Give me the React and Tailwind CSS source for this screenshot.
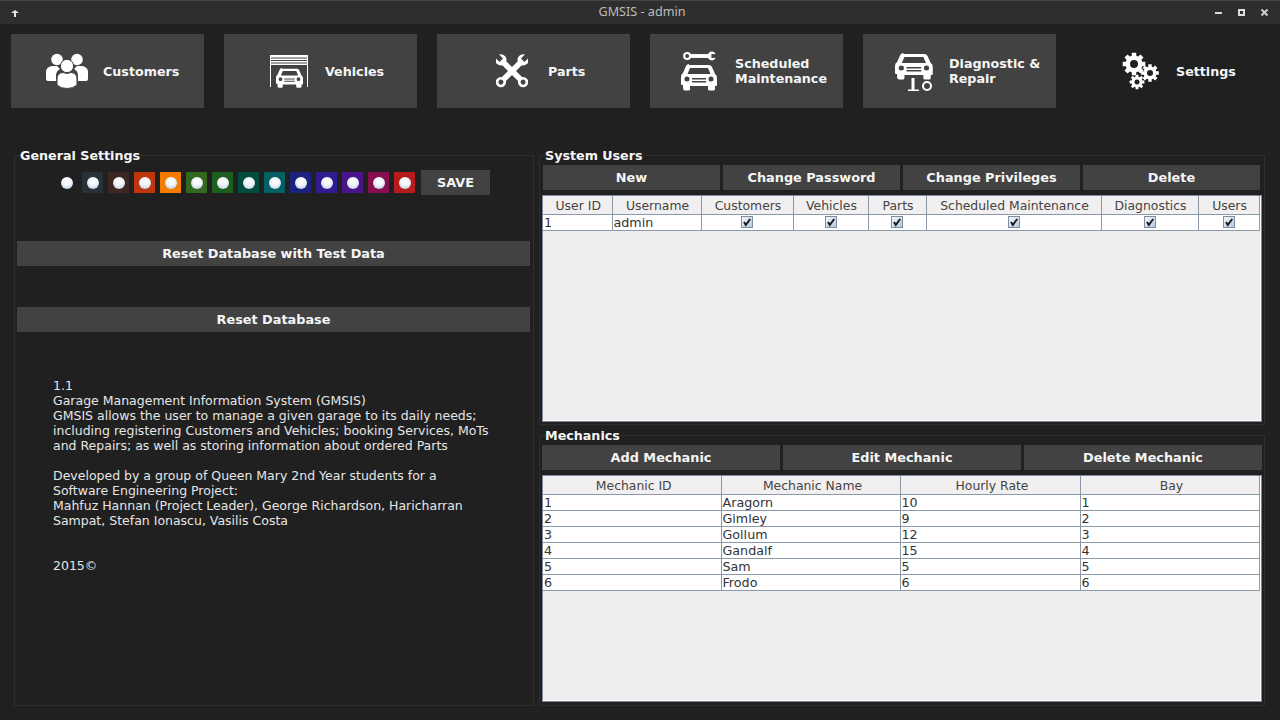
const BTN = "bg-[#424242] text-[#f5f5f5] font-bold text-[12.85px]";

const gearPath = (cx, cy, outer, inner, teeth, hole) => {
  const pts = [];
  const step = (Math.PI * 2) / teeth;
  for (let i = 0; i < teeth; i++) {
    const a = i * step;
    [
      [inner, -0.35],
      [outer, -0.24],
      [outer, 0.24],
      [inner, 0.35],
    ].forEach(([r, k]) => {
      const t = a + k * step;
      pts.push(`${(cx + r * Math.cos(t)).toFixed(2)} ${(cy + r * Math.sin(t)).toFixed(2)}`);
    });
  }
  return `M${pts.join("L")}Z M${cx + hole} ${cy}a${hole} ${hole} 0 1 0 ${-hole * 2} 0a${hole} ${hole} 0 1 0 ${hole * 2} 0Z`;
};

const CAR =
  "M8 1h20q2 0 3 2l3 7q2 1 2 4v7q0 1-1 1h-1v3q0 1.5-1.5 1.5h-4q-1.5 0-1.5-1.5v-3H9v3q0 1.5-1.5 1.5h-4Q2 25.5 2 24v-3H1q-1 0-1-1v-7q0-3 2-4l3-7q1-2 3-2zM9 4l-2.5 6h23L27 4zM3.5 15a2.5 2.5 0 1 0 5 0a2.5 2.5 0 1 0-5 0zM27.5 15a2.5 2.5 0 1 0 5 0a2.5 2.5 0 1 0-5 0zM11 14v1.5h14V14zM11 17v1.5h14V17z";

// open jaw on the right, ring on the left
const Wrench = ({ transform, bar = 4.4 }) => (
  <g transform={transform}>
    <rect x="-13" y={-bar / 2} width="26" height={bar} fill="white" />
    <circle cx="-14" cy="0" r="4.6" fill="white" />
    <circle cx="-14" cy="0" r="2.2" fill="#424242" />
    <circle cx="14" cy="0" r="5" fill="white" />
    <path d="M13.5 -2.2H20V2.2H13.5Z" fill="#424242" />
  </g>
);

const CustomersIcon = () => (
  <svg width="42" height="36" viewBox="0 0 42 36" fill="white">
    <circle cx="11" cy="6.5" r="5.8" />
    <circle cx="31" cy="6.5" r="5.8" />
    <path d="M0 26V19q0-5 6-6l5 0 3 3q-4 2-4 7v5H2q-2 0-2-2zM42 26V19q0-5-6-6l-5 0-3 3q4 2 4 7v5h8q2 0 2-2z" />
    <circle cx="21" cy="13" r="6.6" stroke="#424242" strokeWidth="1" />
    <path d="M11 32V26q0-6 6-6.5l4 1 4-1q6 .5 6 6.5v6q-4 3.500-10 3.500T11 32z" stroke="#424242" strokeWidth="1" />
  </svg>
);

const VehiclesIcon = () => (
  <svg width="40" height="34" viewBox="0 0 40 34">
    <path d="M1 1h38v32h-1V11H2v22H1z" fill="white" />
    <path d="M2 4h36M2 6.500h36M2 9h36" stroke="#424242" strokeWidth="1" />
    <path d={CAR} transform="translate(7 14) scale(.75 .745)" fill="white" fillRule="evenodd" />
  </svg>
);

const PartsIcon = () => (
  <svg width="32" height="34" viewBox="-16 -17 32 34">
    <Wrench transform="rotate(-45) scale(1.12)" bar={5} />
    <Wrench transform="rotate(-135) scale(1.12)" bar={5} />
  </svg>
);

const MaintenanceIcon = () => (
  <svg width="38" height="40" viewBox="0 0 38 40">
    <Wrench transform="translate(18.500 5) scale(.88)" />
    <path d={CAR} transform="translate(0 13)" fill="white" fillRule="evenodd" />
  </svg>
);

const DiagnosticIcon = () => (
  <svg width="40" height="40" viewBox="0 0 40 40">
    <path d={CAR} transform="translate(1 2) scale(1.050 1)" fill="white" fillRule="evenodd" />
    <path d="M17.500 27h3v12h-3zM14 38.500h11V40H14z" fill="white" />
    <circle cx="33" cy="35" r="4" fill="none" stroke="white" strokeWidth="2" />
  </svg>
);

const SettingsIcon = () => (
  <svg width="38" height="38" viewBox="0 0 38 38" fill="white" fillRule="evenodd">
    <path d={gearPath(12, 12, 11.5, 8.5, 8, 4)} />
    <path d={gearPath(28, 21, 9, 6.5, 8, 3)} />
    <path d={gearPath(15, 30, 7.5, 5.5, 8, 2.5)} />
  </svg>
);

const NAV = [
  { label: ["Customers"], Icon: CustomersIcon, pl: "pl-[35px]", gap: "gap-[15px]" },
  { label: ["Vehicles"], Icon: VehiclesIcon, pl: "pl-[45px]", gap: "gap-[16px]" },
  { label: ["Parts"], Icon: PartsIcon, pl: "pl-[59px]", gap: "gap-[20px]" },
  { label: ["Scheduled", "Maintenance"], Icon: MaintenanceIcon, pl: "pl-[31px]", gap: "gap-[16px]" },
  { label: ["Diagnostic &", "Repair"], Icon: DiagnosticIcon, pl: "pl-[31px]", gap: "gap-[15px]" },
  { label: ["Settings"], Icon: SettingsIcon, pl: "pl-[46px]", gap: "gap-[16px]", flat: true },
];

const SWATCHES = [
  "bg-transparent",
  "bg-[#263238]",
  "bg-[#3e2723]",
  "bg-[#bf360c]",
  "bg-[#f57c00]",
  "bg-[#33691e]",
  "bg-[#1b5e20]",
  "bg-[#004d40]",
  "bg-[#006064]",
  "bg-[#1a237e]",
  "bg-[#311b92]",
  "bg-[#4a148c]",
  "bg-[#880e4f]",
  "bg-[#b71c1c]",
];

const USER_COLS = [69, 89, 92, 75, 58, 175, 97, 61];
const USER_HEAD = ["User ID", "Username", "Customers", "Vehicles", "Parts", "Scheduled Maintenance", "Diagnostics", "Users"];
const MECH_COLS = [178, 179, 180, 179];
const MECH_HEAD = ["Mechanic ID", "Mechanic Name", "Hourly Rate", "Bay"];
const MECHANICS = [
  ["1", "Aragorn", "10", "1"],
  ["2", "Gimley", "9", "2"],
  ["3", "Gollum", "12", "3"],
  ["4", "Gandalf", "15", "4"],
  ["5", "Sam", "5", "5"],
  ["6", "Frodo", "6", "6"],
];

const Check = () => (
  <span className="mx-auto block w-[12px] h-[12px] border border-[#7f8fa3] bg-gradient-to-br from-[#f6f8fb] to-[#b4c8e0]">
    <svg width="10" height="10" viewBox="0 0 10 10" className="block">
      <path d="M2 5 3.800 8 8.200 2" fill="none" stroke="#1c1c1c" strokeWidth="2" />
    </svg>
  </span>
);

const DataTable = ({ cols, head, rows, headPad }) => (
  <div className="h-[227px] bg-[#eeeeee] border border-[#7c8a99] shadow-[inset_-1px_-1px_0_white] overflow-hidden">
    <table className="table-fixed border-collapse leading-none text-[#333]" style={{ width: cols.reduce((a, b) => a + b, 0) }}>
      <colgroup>
        {cols.map((w, i) => (
          <col key={i} style={{ width: w }} />
        ))}
      </colgroup>
      <thead>
        <tr className="h-[18px]">
          {head.map((h) => (
            <th key={h} className={`text-[12.4px] font-normal text-[#444] bg-[#f1efef] border-r border-b border-[#8c99a8] p-0 pt-[2px] text-center ${headPad}`}>
              {h}
            </th>
          ))}
        </tr>
      </thead>
      <tbody>
        {rows.map((row, i) => (
          <tr key={i} className="h-[16px] bg-white">
            {row.map((c, j) => (
              <td key={j} className={`text-[12.7px] border-r border-b border-[#8c99a8] p-0 text-left whitespace-nowrap ${c === true ? "" : "pl-px pt-[2px]"}`}>
                {c === true ? <Check /> : c}
              </td>
            ))}
          </tr>
        ))}
      </tbody>
    </table>
  </div>
);

const Panel = ({ title, className, children }) => (
  <fieldset className={`border border-[#2e2e2e] min-w-0 ${className}`}>
    <legend className="ml-[5px] text-[12.7px] leading-[15px] font-bold text-[#f5f5f5]">{title}</legend>
    {children}
  </fieldset>
);

const App = () => (
  <div className="w-[1280px] h-[720px] overflow-hidden bg-[#202020] flex flex-col font-['DejaVu_Sans',sans-serif] text-[12.7px] text-[#f0f0f0]">
    {/* title bar */}
    <div className="h-6 shrink-0 grid grid-cols-3 items-center bg-[#2e2e2e] border-t border-[#444] pl-[11px] pr-[12px]">
      <svg width="8" height="8" viewBox="0 0 8 8" fill="#e8e8e8">
        <path d="M4 1 8 4H5V8H3V4H0z" />
      </svg>
      <span className="font-['Noto_Sans',sans-serif] text-[12.6px] text-center text-[#bdbdbd] pl-[5px]">GMSIS - admin</span>
      <div className="flex items-center justify-end gap-[16px]">
        <span className="w-[7px] h-[2px] bg-[#ddd]" />
        <span className="w-[7px] h-[7px] border-2 border-[#ddd]" />
        <svg width="7" height="7" viewBox="0 0 7 7" stroke="#ccc" strokeWidth="2">
          <path d="M.5.5l6 6M6.500.5l-6 6" />
        </svg>
      </div>
    </div>

    {/* module buttons */}
    <nav className="flex gap-5 pl-[11px] pt-[10px]">
      {NAV.map(({ label, Icon, pl, gap, flat }) => (
        <button
          key={label[0]}
          className={`w-[193px] h-[74px] flex items-center ${pl} ${gap} ${flat ? "" : "bg-[#424242]"} text-[#f5f5f5] font-bold text-left leading-[15px]`}
        >
          <Icon />
          <span>
            {label.map((l) => (
              <span key={l} className="block whitespace-nowrap">
                {l}
              </span>
            ))}
          </span>
        </button>
      ))}
    </nav>

    <main className="flex gap-[5px] pl-[14px] mt-10">
      {/* general settings */}
      <Panel title="General Settings" className="w-[520px] h-[558px]">
        <div className="flex items-center pl-[41px] mt-[7px]">
          <div className="flex gap-[5px]">
            {SWATCHES.map((c) => (
              <div key={c} className={`w-[21px] h-[21px] flex items-center justify-center ${c}`}>
                <span className="w-[12px] h-[12px] rounded-full bg-[radial-gradient(circle_at_50%_35%,#ffffff_0%,#f0f4fa_45%,#b9c9e6_85%)]" />
              </div>
            ))}
          </div>
          <button className={`ml-[6px] w-[69px] h-[25px] ${BTN}`}>SAVE</button>
        </div>
        <div className="ml-[2px] mr-[3px] flex flex-col gap-[41px] mt-[46px]">
          <button className={`h-[25px] ${BTN}`}>Reset Database with Test Data</button>
          <button className={`h-[25px] ${BTN}`}>Reset Database</button>
        </div>
        <div className="ml-[38px] mt-[46px] w-[460px] text-[12.5px] leading-[15px] whitespace-nowrap text-[#e6e6e6]">
          <p>1.1</p>
          <p>Garage Management Information System (GMSIS)</p>
          <p>GMSIS allows the user to manage a given garage to its daily needs;</p>
          <p>including registering Customers and Vehicles; booking Services, MoTs</p>
          <p>and Repairs; as well as storing information about ordered Parts</p>
          <p className="mt-[15px]">Developed by a group of Queen Mary 2nd Year students for a</p>
          <p>Software Engineering Project:</p>
          <p>Mahfuz Hannan (Project Leader), George Richardson, Haricharran</p>
          <p>Sampat, Stefan Ionascu, Vasilis Costa</p>
          <p className="mt-[30px]">2015©</p>
        </div>
      </Panel>

      <div className="w-[726px] flex flex-col gap-[3px]">
        <Panel title="System Users" className="h-[277px]">
          <div className="flex gap-[3px] pl-[3px] mt-[2px]">
            {["New", "Change Password", "Change Privileges", "Delete"].map((b) => (
              <button key={b} className={`w-[177px] h-[25px] ${BTN}`}>
                {b}
              </button>
            ))}
          </div>
          <div className="ml-[2px] mt-[5px] w-[720px]">
            <DataTable cols={USER_COLS} head={USER_HEAD} rows={[["1", "admin", true, true, true, true, true, true]]} headPad="pl-[2px]" />
          </div>
        </Panel>
        <Panel title="Mechanics" className="h-[278px]">
          <div className="flex gap-[3px] pl-[2px] mt-[2px]">
            {["Add Mechanic", "Edit Mechanic", "Delete Mechanic"].map((b) => (
              <button key={b} className={`w-[238px] h-[25px] ${BTN}`}>
                {b}
              </button>
            ))}
          </div>
          <div className="ml-[2px] mt-[5px] w-[720px]">
            <DataTable cols={MECH_COLS} head={MECH_HEAD} rows={MECHANICS} headPad="pl-[4px]" />
          </div>
        </Panel>
      </div>
    </main>
  </div>
);

export default App;
